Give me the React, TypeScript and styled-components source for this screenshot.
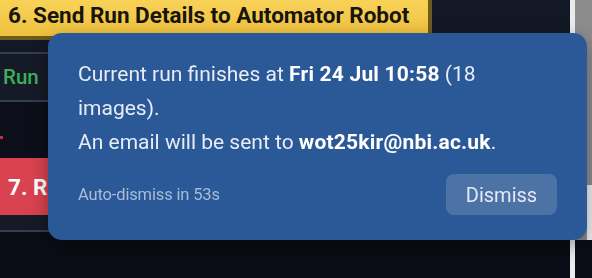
import styled, { createGlobalStyle } from 'styled-components';

const GlobalStyle = createGlobalStyle`
  html, body {
    margin: 0;
    padding: 0;
    height: 100%;
    overflow: hidden;
    background: #0a0d15;
    font-family: Roboto, "Liberation Sans", Arial, sans-serif;
  }
  #root { height: 100%; }
`;

const Page = styled.div`
  display: flex;
  height: 100%;
`;

const Main = styled.div`
  flex: 1;
  display: flex;
  flex-direction: column;
`;

const Header = styled.div`
  display: flex;
  background: #131826;
  padding-bottom: 12px;
`;

const StepButton = styled.div<{ $tone: 'yellow' | 'red' }>`
  display: flex;
  align-items: center;
  box-sizing: border-box;
  padding-left: 8px;
  font-size: 22.5px;
  font-weight: 700;
  white-space: nowrap;
  overflow: hidden;
  ${(p) =>
    p.$tone === 'yellow'
      ? `
    width: 432px;
    height: 40px;
    padding-bottom: 7px;
    color: #17150c;
    background: linear-gradient(#f8d258, #efc13f);
    border-right: 4px solid #6f5b1d;
    border-bottom: 4px solid #6f5b1d;
  `
      : `
    height: 57px;
    color: #fff;
    background: #d8434f;
  `}
`;

const Row = styled.div`
  display: flex;
  align-items: center;
  height: 46px;
  padding-left: 3px;
  background: #151a27;
  border-top: 2px solid #343c50;
  border-bottom: 2px solid #343c50;
  color: #3fae5c;
  font-size: 20.5px;
  font-weight: 500;
`;

const Spacer = styled.div`
  height: 56px;
  display: flex;
  align-items: center;
  background: #0c0f19;
`;

const Mark = styled.span`
  width: 3px;
  height: 3px;
  margin-top: 14px;
  background: #c2303c;
`;

const Strip = styled.div`
  height: 15px;
  background: #151a26;
  border-bottom: 2px solid #343c50;
`;

const Scrollbar = styled.div`
  width: 22px;
  display: flex;
  flex-direction: column;
  border-left: 5px solid #e9ebee;
  box-sizing: border-box;
  background: #8c8c8c;
`;

const Track = styled.div`
  height: 185px;
`;

const Thumb = styled.div`
  height: 55px;
  background: linear-gradient(90deg, #8c8c8c 70%, #eceef0 70%);
`;

const Rest = styled.div`
  flex: 1;
  background: #0a0d15;
`;

const Toast = styled.div`
  position: fixed;
  left: 48px;
  top: 33px;
  width: 539px;
  box-sizing: border-box;
  padding: 24px 30px 25px;
  background: #2b5896;
  border-radius: 14px;
  color: #e7edf6;
  box-shadow: 0 6px 18px rgba(0, 0, 0, 0.35);
`;

const Message = styled.p`
  margin: 0;
  font-size: 21px;
  line-height: 34px;

  b {
    color: #fff;
    font-weight: 700;
    letter-spacing: 0.2px;
  }
`;

const Footer = styled.div`
  display: flex;
  align-items: center;
  justify-content: space-between;
  margin-top: 15px;
`;

const Countdown = styled.span`
  font-size: 16.5px;
  color: #a9bcd8;
  letter-spacing: -0.15px;
`;

const DismissButton = styled.button`
  width: 111px;
  height: 41px;
  border: 0;
  border-radius: 8px;
  background: rgba(255, 255, 255, 0.16);
  color: #e3eaf5;
  font-family: inherit;
  font-size: 20px;
  cursor: pointer;
`;

export default function App() {
  return (
    <>
      <GlobalStyle />
      <Page>
        <Main>
          <Header>
            <StepButton $tone="yellow">6. Send Run Details to Automator Robot</StepButton>
          </Header>
          <Row>Run</Row>
          <Spacer>
            <Mark />
          </Spacer>
          <StepButton $tone="red">7. Run Automator</StepButton>
          <Strip />
        </Main>
        <Scrollbar>
          <Track />
          <Thumb />
          <Rest />
        </Scrollbar>
      </Page>
      <Toast>
        <Message>
          Current run finishes at <b>Fri 24 Jul 10:58</b> (18 images).
          <br />
          An email will be sent to <b>wot25kir@nbi.ac.uk</b>.
        </Message>
        <Footer>
          <Countdown>Auto-dismiss in 53s</Countdown>
          <DismissButton>Dismiss</DismissButton>
        </Footer>
      </Toast>
    </>
  );
}
